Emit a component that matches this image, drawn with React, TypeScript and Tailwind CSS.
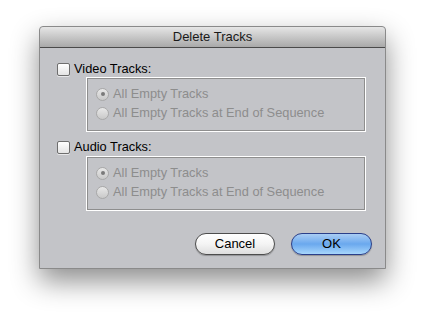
import React from 'react';

const Checkbox = () => (
  <span className="inline-block w-[13px] h-[13px] rounded-[2px] border border-[#6e6e6e] bg-gradient-to-b from-white to-[#e4e4e4] shadow-[0_1px_0_rgba(255,255,255,0.6)]" />
);

const Radio = ({ checked }: { checked?: boolean }) => (
  <span className="relative inline-flex items-center justify-center w-[13px] h-[13px] rounded-full border border-[#a8a8a8] bg-gradient-to-b from-[#e8e8e8] to-[#c9c9c9]">
    {checked && <span className="w-[4px] h-[4px] rounded-full bg-[#7a7a7a]" />}
  </span>
);

const OptionBox = () => (
  <div className="ml-[46px] w-[280px] h-[55px] border border-white shadow-[inset_0_0_0_1px_#8e8e8e] flex flex-col pl-[9px] pt-[9px] gap-[5px] text-[#8d8d8d]">
    <div className="flex items-center gap-[4px] h-[14px]">
      <Radio checked />
      <span>All Empty Tracks</span>
    </div>
    <div className="flex items-center gap-[4px] h-[14px]">
      <Radio />
      <span>All Empty Tracks at End of Sequence</span>
    </div>
  </div>
);

export default function App() {
  return (
    <div className="w-[425px] h-[322px] bg-white pl-[39px] pt-[26px] font-['Liberation_Sans',Arial,sans-serif] text-[12.8px] leading-[14px] text-black">
      <div className="w-[347px] h-[243px] flex flex-col rounded-t-[4px] border border-[#8a8a8a] bg-[#c3c4c8] shadow-[0_12px_28px_rgba(0,0,0,0.45)]">
        {/* Title bar */}
        <div className="h-[21px] flex items-center justify-center rounded-t-[4px] bg-gradient-to-b from-[#e6e6e6] to-[#a9a9a9] border-b border-[#4a4a4a] text-[13px] text-[#1a1a1a]">
          Delete Tracks
        </div>

        {/* Body */}
        <div className="flex flex-col pl-[17px]">
          <div className="mt-[14px] flex items-center gap-[4px] h-[14px]">
            <Checkbox />
            <span>Video Tracks:</span>
          </div>
          <div className="mt-[1px] -ml-[17px]">
            <OptionBox />
          </div>

          <div className="mt-[8px] flex items-center gap-[4px] h-[14px]">
            <Checkbox />
            <span>Audio Tracks:</span>
          </div>
          <div className="mt-[2px] -ml-[17px]">
            <OptionBox />
          </div>
        </div>

        {/* Buttons */}
        <div className="mt-[22px] flex justify-end gap-[16px] pr-[13px]">
          <button className="w-[80px] h-[22px] rounded-full border border-[#4d4d4d] bg-gradient-to-b from-white via-[#f4f4f4] to-[#dedede] text-[13px] text-black shadow-[0_1px_1px_rgba(0,0,0,0.25)]">
            Cancel
          </button>
          <button className="w-[81px] h-[22px] rounded-full border border-[#2a3f8a] bg-gradient-to-b from-[#a9cdf4] via-[#6aa8ee] to-[#a7d6fb] text-[13px] text-black shadow-[0_1px_1px_rgba(0,0,0,0.25)]">
            OK
          </button>
        </div>
      </div>
    </div>
  );
}
